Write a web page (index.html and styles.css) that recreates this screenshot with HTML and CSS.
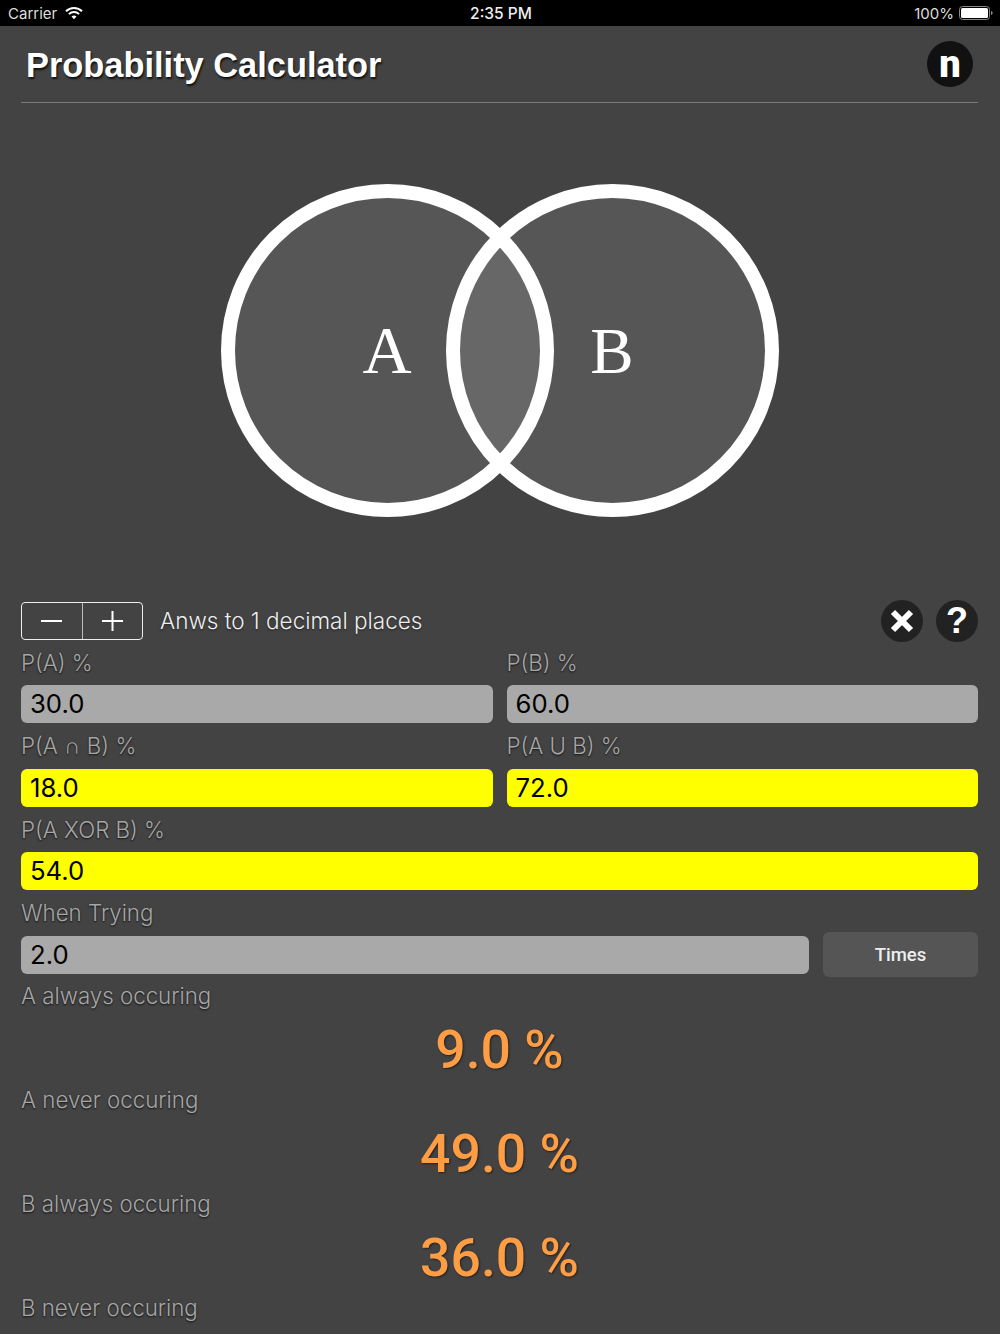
FILE: index.html
```html
<!DOCTYPE html>
<html lang="en">
<head>
<meta charset="utf-8">
<title>Probability Calculator</title>
<link rel="stylesheet" href="styles.css">
</head>
<body>
<div class="status">
  <div class="status-left">
    <span>Carrier</span>
    <svg class="wifi" width="18" height="14" viewBox="0 0 18 14"><path d="M1 5.200a11.500 11.500 0 0 1 16 0" fill="none" stroke="#fff" stroke-width="2"/><path d="M3.900 8.100a7.400 7.400 0 0 1 10.200 0" fill="none" stroke="#fff" stroke-width="2"/><path d="M6.500 10.600 9 13.200l2.500-2.600a3.600 3.600 0 0 0-5 0z" fill="#fff"/></svg>
  </div>
  <div class="status-time">2:35 PM</div>
  <div class="status-right">
    <span>100%</span>
    <svg width="34" height="16" viewBox="0 0 34 16"><rect x="0.5" y="1.500" width="30" height="13" rx="3" fill="none" stroke="#888"/><rect x="2" y="3" width="27" height="10" rx="1.500" fill="#fff"/><path d="M32 6v4c1-.3 1.600-1 1.600-2S33 6.300 32 6z" fill="#888"/></svg>
  </div>
</div>
<header class="header">
  <h1 class="title">Probability Calculator</h1>
  <div class="logo">n</div>
</header>
<section class="venn">
  <svg width="560" height="336" viewBox="0 0 560 336">
    <circle class="disc" cx="167.500" cy="168.500" r="159.500"/>
    <circle class="disc" cx="392.500" cy="168.500" r="159.500"/>
    <circle class="ring" cx="167.500" cy="168.500" r="159.500"/>
    <circle class="ring" cx="392.500" cy="168.500" r="159.500"/>
    <text class="venn-letter" x="167" y="191">A</text>
    <text class="venn-letter venn-letter-b" x="392" y="191">B</text>
  </svg>
</section>
<main class="form">
  <div class="toolbar">
    <div class="stepper">
      <div class="step"><svg width="24" height="24" viewBox="0 0 24 24"><path d="M1 12h21" stroke="#fff" stroke-width="2"/></svg></div>
      <div class="step step-plus"><svg width="24" height="24" viewBox="0 0 24 24"><path d="M2 12h21M12.500 2v20" stroke="#fff" stroke-width="2"/></svg></div>
    </div>
    <div class="decimals">Anws to 1 decimal places</div>
    <div class="round-btn round-close"><svg width="28" height="28" viewBox="0 0 28 28"><path d="M5 5l18 18M23 5 5 23" stroke="#fff" stroke-width="6"/></svg></div>
    <div class="round-btn">?</div>
  </div>
  <div class="grid">
    <div><div class="label">P(A) %</div><div class="field gray">30.0</div></div>
    <div><div class="label">P(B) %</div><div class="field gray">60.0</div></div>
    <div><div class="label">P(A <span class="cap">∩</span> B) %</div><div class="field yellow">18.0</div></div>
    <div><div class="label">P(A U B) %</div><div class="field yellow">72.0</div></div>
    <div class="wide"><div class="label">P(A XOR B) %</div><div class="field yellow">54.0</div></div>
    <div class="wide">
      <div class="label">When Trying</div>
      <div class="try-row">
        <div class="field gray try-field">2.0</div>
        <div class="times">Times</div>
      </div>
    </div>
  </div>
  <div class="results">
    <div class="label">A always occuring</div>
    <div class="value">9.0 %</div>
    <div class="label">A never occuring</div>
    <div class="value">49.0 %</div>
    <div class="label">B always occuring</div>
    <div class="value">36.0 %</div>
    <div class="label">B never occuring</div>
  </div>
</main>
</body>
</html>
```
FILE: styles.css
```css
html, body { margin: 0; padding: 0; background: #434343; }
body { font-family: Inter, Roboto, "Liberation Sans", sans-serif; color: #fff; }

.status {
  height: 26px;
  background: #000;
  display: grid;
  grid-template-columns: 1fr auto 1fr;
  align-items: center;
  padding: 0 8px;
  font-size: 15px;
  color: #ddd;
}
.status-left { display: flex; align-items: center; gap: 8px; }
.wifi { margin-top: -1px; }
.status-time { font-size: 15.5px; font-weight: 500; color: #eee; margin-left: 2px; }
.status-right { display: flex; justify-content: flex-end; align-items: center; gap: 5px; margin-right: -1px; }

.header {
  height: 76px;
  margin: 0 22px 0 21px;
  border-bottom: 1px solid #7a7a7a;
  display: flex;
  align-items: center;
  justify-content: space-between;
  padding: 0 5px 0 5px;
}
.title {
  margin: 2px 0 0;
  font: 700 34.4px "Liberation Sans", sans-serif;
  text-shadow: 1px 2px 2px #111;
}
.logo {
  width: 46px;
  height: 46px;
  border-radius: 50%;
  background: #111;
  display: flex;
  align-items: center;
  justify-content: center;
  font: 900 38px/44px Roboto, sans-serif;
}

.venn {
  height: 493.5px;
  padding-bottom: 5px;
  display: flex;
  align-items: center;
  justify-content: center;
}
.disc { fill: rgba(255, 255, 255, 0.1); }
.ring { fill: none; stroke: #fff; stroke-width: 14; }
.venn-letter {
  fill: #fff;
  font: 68px "Liberation Serif", serif;
  text-anchor: middle;
}
.venn-letter-b { font-size: 65px; }

.form { padding: 0 22px 0 21px; }

.toolbar { height: 38px; display: flex; align-items: center; gap: 18px; }
.stepper {
  width: 120px;
  height: 36px;
  border: 1px solid #eee;
  border-radius: 4px;
  display: flex;
}
.step { flex: 1; display: flex; align-items: center; justify-content: center; }
.step-plus { border-left: 1px solid #bbb; }
.decimals {
  flex: 1;
  font-size: 22.5px;
  font-weight: 300;
  color: #eee;
  margin-left: -1px;
  text-shadow: 0 1px 2px #222;
}
.round-btn {
  width: 42px;
  height: 42px;
  border-radius: 50%;
  background: #222;
  display: flex;
  align-items: center;
  justify-content: center;
  font: 700 36px/42px "Liberation Sans", sans-serif;
  flex: none;
}
.round-close { margin-right: -5px; }

.grid { display: grid; grid-template-columns: 1fr 1fr; column-gap: 14px; }
.wide { grid-column: 1 / -1; }

.label {
  height: 45.5px;
  line-height: 45.5px;
  font-size: 22.3px;
  font-weight: 300;
  color: #a6a6a6;
  text-shadow: 0 1px 2px #111;
}
.cap { font-family: "DejaVu Sans", sans-serif; font-size: 23px; line-height: 1; }
.field {
  height: 38px;
  line-height: 38.5px;
  border-radius: 6px;
  padding-left: 9px;
  font-size: 25.7px;
  color: #000;
}
.gray { background: #a9a9a9; }
.yellow { background: #ffff00; }

.try-row { display: flex; align-items: center; height: 38px; gap: 14px; }
.try-field { flex: 1; }
.times {
  width: 155px;
  height: 45px;
  border-radius: 6px;
  background: #555;
  text-align: center;
  font: 500 18.5px/46px Roboto, sans-serif;
  color: #eee;
  flex: none;
}

.results { margin-top: -1px; }
.value {
  height: 54.5px;
  padding-top: 4px;
  text-align: center;
  font: 500 53.5px/55.5px Roboto, sans-serif;
  color: #ff9d45;
  text-shadow: 1px 1px 2px #222;
}
```
